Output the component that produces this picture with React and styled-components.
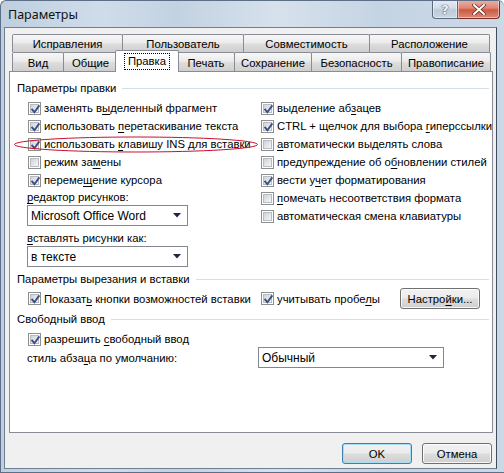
import React from "react";
import styled, { createGlobalStyle } from "styled-components";

const Global = createGlobalStyle`
  html, body { margin: 0; padding: 0; background: #ffffff; }
  * { box-sizing: border-box; }
`;

const UI = `"Liberation Sans", Arial, sans-serif`;

const Win = styled.div`
  width: 504px;
  height: 473px;
  display: flex;
  flex-direction: column;
  padding: 0 7px 3px 3px;
  background: linear-gradient(90deg, #bfcfe0 0%, #cfdcea 20%, #c3d2e2 35%, #d6e1ec 55%, #c5d4e4 75%, #cbd8e6 100%);
  border: 1px solid #5d6f86;
  border-right: none;
  border-radius: 6px 6px 0 0;
  overflow: hidden;
  font-family: ${UI};
  font-size: 11.3px;
  color: #000;
`;

const TitleBar = styled.div`
  height: 26px;
  display: flex;
  align-items: flex-start;
  flex-shrink: 0;
`;

const Title = styled.div`
  font-family: "Noto Sans", "Open Sans", sans-serif;
  font-size: 12.5px;
  padding: 5px 0 0 4px;
  color: #111;
`;

const Captions = styled.div`
  margin-left: auto;
  margin-right: -3px;
  margin-top: -1px;
  display: flex;
`;

const CapBtn = styled.div`
  width: ${p => p.$w}px;
  height: 19px;
  display: flex;
  align-items: center;
  justify-content: center;
  border: 1px solid ${p => (p.$red ? "#7a2a28" : "#5b6a7d")};
  border-top: none;
  border-radius: ${p => (p.$red ? "0 0 4px 0" : "0 0 0 4px")};
  background: ${p =>
    p.$red
      ? "linear-gradient(180deg, #eab3a8 0%, #de8672 45%, #cc5a40 55%, #de8a76 100%)"
      : "linear-gradient(180deg, #e4ebf3 0%, #d3dde8 45%, #bccad9 55%, #cad6e3 100%)"};
  box-shadow: inset 0 0 0 1px rgba(255, 255, 255, 0.45);
  & + & { border-left: none; }
`;

const QMark = styled.span`
  font-family: "DejaVu Sans", sans-serif;
  font-weight: bold;
  font-size: 13px;
  color: #f4f7fa;
  text-shadow: 0 0 1px #2c3848, 0 0 1px #2c3848;
`;

const Client = styled.div`
  flex: 1;
  display: flex;
  flex-direction: column;
  background: #f0f0f0;
  border: 1px solid #6f8095;
  border-right-color: #3d4c5f;
  padding: 6px 3px 0 4px;
`;

const TabRow = styled.div`
  display: flex;
  padding-left: 3px;
  height: ${p => p.$h}px;
  position: relative;
  z-index: ${p => p.$z || 0};
`;

const Tab = styled.div`
  width: ${p => p.$w}px;
  flex-shrink: 0;
  display: flex;
  align-items: center;
  justify-content: center;
  border: 1px solid #898c95;
  border-bottom: none;
  border-radius: 2px 2px 0 0;
  background: linear-gradient(180deg, #f7f7f7 0%, #ebebeb 45%, #dcdcdc 55%, #cfcfcf 100%);
  margin-left: -1px;
  &:first-child { margin-left: 0; }
  padding-top: 1px;
  white-space: nowrap;
`;

const ActiveTab = styled(Tab)`
  background: #ffffff;
  height: 22px;
  margin: -2px -1px 0 -3px;
  width: ${p => p.$w + 4}px;
  position: relative;
  z-index: 2;
  padding-top: 0;
`;

const Focus = styled.span`
  outline: 1px dotted #000;
  outline-offset: 0;
  padding: 0 3px;
  line-height: 15px;
`;

const Panel = styled.div`
  position: relative;
  height: 362px;
  background: #ffffff;
  border: 1px solid #898c95;
  padding: 9px 3px 0 7px;
  display: flex;
  flex-direction: column;
  z-index: 1;
`;

const Group = styled.div`
  height: 14px;
  display: flex;
  align-items: center;
  gap: 6px;
  margin-top: ${p => p.$mt || 0}px;
  &::after {
    content: "";
    flex: 1;
    height: 1px;
    background: #d5dfe5;
  }
`;

const Cols = styled.div`
  display: grid;
  grid-template-columns: 233px 1fr;
  padding-left: 10px;
  margin-top: ${p => p.$mt || 0}px;
  align-items: start;
`;

const Col = styled.div`
  display: flex;
  flex-direction: column;
`;

const Row = styled.div`
  height: ${p => p.$h || 18}px;
  display: flex;
  align-items: center;
  gap: 3px;
  padding-left: 1px;
  white-space: nowrap;
`;

const Label = styled.div`
  height: 16px;
  display: flex;
  align-items: center;
  white-space: nowrap;
  margin-top: ${p => p.$mt || 0}px;
`;

const Box = styled.span`
  width: 13px;
  height: 13px;
  flex-shrink: 0;
  border: 1px solid #8e8f8f;
  background: #fff;
  padding: 1px;
  display: flex;
`;

const BoxInner = styled.span`
  flex: 1;
  background: linear-gradient(135deg, #cfd3d8 0%, #e6e8ea 60%, #f6f6f6 100%);
  border: 1px solid #b8bcc2;
  position: relative;
  display: flex;
  align-items: center;
  justify-content: center;
`;

const Combo = styled.div`
  width: ${p => p.$w}px;
  height: 21px;
  border: 1px solid #828790;
  background: #fff;
  display: flex;
  align-items: center;
  padding: 0 6px 0 3px;
  font-size: 12px;
  margin-top: ${p => p.$mt || 0}px;
  & > span { flex: 1; }
`;

const Button = styled.div`
  width: ${p => p.$w}px;
  height: 21px;
  display: flex;
  align-items: center;
  justify-content: center;
  border: 1px solid ${p => (p.$def ? "#3c7fb1" : "#707070")};
  border-radius: 3px;
  background: linear-gradient(180deg, #f2f2f2 0%, #ebebeb 48%, #dddddd 52%, #cfcfcf 100%);
  box-shadow: inset 0 0 0 1px ${p => (p.$def ? "#a6dcf4" : "rgba(255,255,255,0.8)")};
  white-space: nowrap;
`;

const U = styled.span`
  text-decoration: underline;
  text-underline-offset: 2px;
`;

const Pair = styled.div`
  display: flex;
  align-items: center;
  height: ${p => p.$h}px;
  padding-left: 10px;
  margin-top: ${p => p.$mt || 0}px;
`;

const Slot = styled.div`
  width: ${p => p.$w}px;
  flex-shrink: 0;
  display: flex;
  align-items: center;
  white-space: nowrap;
`;

const Footer = styled.div`
  display: flex;
  justify-content: flex-end;
  gap: 10px;
  padding: 10px 1px 0 0;
`;

const Ellipse = styled.svg`
  position: absolute;
  left: 4px;
  top: 64px;
  overflow: visible;
`;

function Check({ on }) {
  return (
    <Box>
      <BoxInner>
        {on && (
          <svg width="11" height="11" viewBox="0 0 11 11" style={{ position: "absolute", left: -1, top: -1 }}>
            <path d="M2.2 5.6 L4.4 8.2 L8.8 2.2" fill="none" stroke="#3a4f8a" strokeWidth="1.9" strokeLinecap="square" />
          </svg>
        )}
      </BoxInner>
    </Box>
  );
}

function CB({ on, children }) {
  return (
    <Row>
      <Check on={on} />
      <span>{children}</span>
    </Row>
  );
}

function Arrow() {
  return (
    <svg width="8" height="5" viewBox="0 0 8 5">
      <path d="M0 0 H8 L4 4.5 Z" fill="#1c2640" />
    </svg>
  );
}

const row1 = [
  ["Исправления", 111],
  ["Пользователь", 122],
  ["Совместимость", 127],
  ["Расположение", 121],
];
const row2 = [
  ["Вид", 52],
  ["Общие", 55],
  ["Правка", 60],
  ["Печать", 58],
  ["Сохранение", 78],
  ["Безопасность", 91],
  ["Правописание", 90],
];

export default function App() {
  return (
    <>
      <Global />
      <Win>
        <TitleBar>
          <Title>Параметры</Title>
          <Captions>
            <CapBtn $w={26}>
              <QMark>?</QMark>
            </CapBtn>
            <CapBtn $w={42} $red>
              <svg width="14" height="11" viewBox="0 0 14 11">
                <path d="M2 1 L12 10 M12 1 L2 10" stroke="#6a2a22" strokeWidth="3.6" strokeLinecap="round" />
                <path d="M2 1 L12 10 M12 1 L2 10" stroke="#ffffff" strokeWidth="2" strokeLinecap="round" />
              </svg>
            </CapBtn>
          </Captions>
        </TitleBar>
        <Client>
          <TabRow $h={18}>
            {row1.map(([t, w]) => (
              <Tab key={t} $w={w}>{t}</Tab>
            ))}
          </TabRow>
          <TabRow $h={19} $z={2}>
            {row2.map(([t, w]) =>
              t === "Правка" ? (
                <ActiveTab key={t} $w={w}><Focus>{t}</Focus></ActiveTab>
              ) : (
                <Tab key={t} $w={w}>{t}</Tab>
              )
            )}
          </TabRow>
          <Panel>
            <Group>Параметры правки</Group>
            <Cols $mt={4}>
              <Col>
                <CB on>заменять в<U>ы</U>деленный фрагмент</CB>
                <CB on>использовать <U>п</U>еретаскивание текста</CB>
                <CB on>использовать <U>к</U>лавишу INS для вставки</CB>
                <CB>режим за<U>м</U>ены</CB>
                <CB on>переме<U>щ</U>ение курсора</CB>
                <Label><span><U>р</U>едактор рисунков:</span></Label>
                <Combo $w={161}><span>Microsoft Office Word</span><Arrow /></Combo>
                <Label $mt={4}><span><U>в</U>ставлять рисунки как:</span></Label>
                <Combo $w={161}><span>в тексте</span><Arrow /></Combo>
              </Col>
              <Col>
                <CB on>выделение аб<U>з</U>ацев</CB>
                <CB on>CTRL + щелчок для выбора <U>г</U>иперссылки</CB>
                <CB><U>а</U>втоматически выделять слова</CB>
                <CB>предупреждение об о<U>б</U>новлении стилей</CB>
                <CB on>вести у<U>ч</U>ет форматирования</CB>
                <CB><U>п</U>омечать несоответствия формата</CB>
                <CB>автоматическая смена клавиатуры</CB>
              </Col>
            </Cols>
            <Group $mt={5}>Параметры вырезания и вставки</Group>
            <Pair $h={21} $mt={2}>
              <Slot $w={233}><CB on>Показат<U>ь</U> кнопки возможностей вставки</CB></Slot>
              <Slot $w={140}><CB on>учитывать пробе<U>л</U>ы</CB></Slot>
              <Button $w={80}>Настро<U>й</U>ки...</Button>
            </Pair>
            <Group $mt={3}>Свободный ввод</Group>
            <Pair $h={18} $mt={4}>
              <CB on>разрешить <U>с</U>вободный ввод</CB>
            </Pair>
            <Pair $h={21} $mt={-1}>
              <Slot $w={231}>стиль абза<U>ц</U>а по умолчанию:</Slot>
              <Combo $w={186}><span>Обычный</span><Arrow /></Combo>
            </Pair>
            <Ellipse width="244" height="17" viewBox="0 0 244 17">
              <ellipse cx="122" cy="8.5" rx="121.5" ry="7.5" fill="none" stroke="#c8102e" strokeWidth="1" />
            </Ellipse>
          </Panel>
          <Footer>
            <Button $w={70} $def>OK</Button>
            <Button $w={70}>Отмена</Button>
          </Footer>
        </Client>
      </Win>
    </>
  );
}
